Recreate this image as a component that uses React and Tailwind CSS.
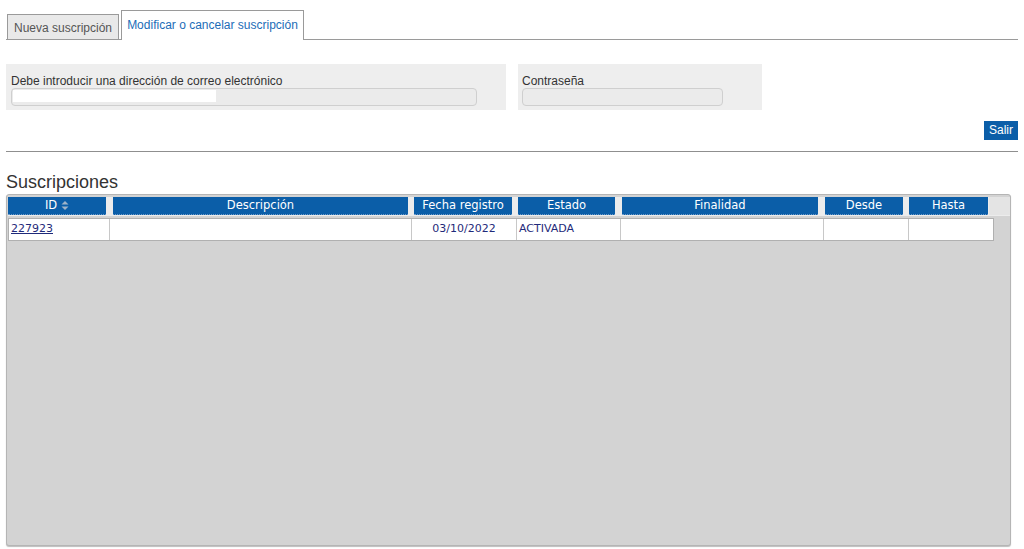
import { useState } from 'react';

// Column layout for the subscriptions grid
const headers = [
  { label: 'ID', cls: 'w-[98px]', sort: true },
  { label: 'Descripción', cls: 'ml-[7px] w-[295px]' },
  { label: 'Fecha registro', cls: 'ml-[6px] w-[98px]' },
  { label: 'Estado', cls: 'ml-[6px] w-[97px]' },
  { label: 'Finalidad', cls: 'ml-[7px] w-[196px]' },
  { label: 'Desde', cls: 'ml-[7px] w-[78px]' },
  { label: 'Hasta', cls: 'ml-[6px] w-[79px]' },
];

const rows = [
  { id: '227923', descripcion: '', fecha: '03/10/2022', estado: 'ACTIVADA', finalidad: '', desde: '', hasta: '' },
];

function SortIcon() {
  return (
    <svg width="8" height="11" viewBox="0 0 8 11" className="ml-[4px] inline-block">
      <path d="M4 1 L7.5 4.5 H0.5 Z" fill="#9fb3c8" />
      <path d="M4 10 L7.5 6.5 H0.5 Z" fill="#9fb3c8" />
    </svg>
  );
}

export default function App() {
  // Selected tab
  const [tab, setTab] = useState('modificar');

  return (
    <div className="min-h-[549px] bg-white px-[6px] font-['Liberation_Sans',Arial,sans-serif] text-[12px] text-[#333]">
      {/* Tabs */}
      <div className="flex items-end h-[40px] border-b border-[#9a9a9a]">
        <button
          onClick={() => setTab('nueva')}
          className="ml-[1px] w-[112px] h-[26px] -mb-[1px] border border-[#9a9a9a] bg-[#e9e9e9] text-[#555] text-[12px] leading-[24px] pt-[1px]"
        >
          Nueva suscripción
        </button>
        <button
          onClick={() => setTab('modificar')}
          className="ml-[2px] w-[183px] h-[30px] -mb-[1px] border border-b-0 border-[#9a9a9a] bg-white text-[#1c6db7] text-[12px] leading-[28px] pb-[1px]"
        >
          Modificar o cancelar suscripción
        </button>
      </div>

      {/* Credentials */}
      <div className="flex mt-[24px]">
        <div className="w-[500px] h-[46px] bg-[#eeeeee] pl-[5px] pt-[10px]">
          <div className="leading-[14px] text-[#333]">Debe introducir una dirección de correo electrónico</div>
          <div className="w-[466px] h-[18px] rounded-[4px] border border-[#cfcfcf] bg-[#ebebeb] relative">
            <div className="absolute left-[1px] top-[1px] w-[203px] h-[12px] bg-white" />
          </div>
        </div>
        <div className="ml-[12px] w-[244px] h-[46px] bg-[#eeeeee] pl-[4px] pt-[10px]">
          <div className="leading-[14px] text-[#333]">Contraseña</div>
          <div className="w-[201px] h-[18px] rounded-[4px] border border-[#cfcfcf] bg-[#ebebeb]" />
        </div>
      </div>

      {/* Logout */}
      <div className="flex justify-end mt-[11px]">
        <button className="h-[19px] w-[34px] bg-[#0b5ea8] text-white text-[12px] leading-[19px]">Salir</button>
      </div>

      <div className="mt-[11px] border-t border-[#8f8f8f]" />

      <h2 className="mt-[19px] text-[18px] leading-[22px] text-[#333]">Suscripciones</h2>

      {/* Subscriptions grid */}
      <div className="mt-[1px] mr-[7px] h-[352px] rounded-[3px] border border-[#b5b5b5] bg-[#d3d3d3] pl-[1px] pt-[2px] shadow-[0_1px_1px_#bdbdbd] font-['DejaVu_Sans',Verdana,sans-serif] text-[11px] overflow-hidden">
        <div className="flex h-[19px] bg-[#ececec]">
          {headers.map((h) => (
            <div
              key={h.label}
              className={`${h.cls} shrink-0 h-[18px] flex items-center justify-center bg-[#0b5ea8] text-white text-[11.5px] border-b border-dotted border-[#6d9ccb]`}
            >
              {h.label}
              {h.sort && <SortIcon />}
            </div>
          ))}
          <div className="ml-[1px] flex-1 h-[18px] bg-[#e4e4e4]" />
        </div>

        {rows.map((r) => (
          <div key={r.id} className="mt-[2px] flex h-[23px] w-[986px] bg-white border border-[#b0b0b0] text-[#1f2a7a]">
            <div className="w-[101px] shrink-0 pl-[2px] flex items-center border-r border-[#c8c8c8]">
              <a href="#" className="underline text-[#1f2a7a]">{r.id}</a>
            </div>
            <div className="w-[302px] shrink-0 border-r border-[#c8c8c8]">{r.descripcion}</div>
            <div className="w-[105px] shrink-0 flex items-center justify-center border-r border-[#c8c8c8]">{r.fecha}</div>
            <div className="w-[104px] shrink-0 pl-[2px] flex items-center border-r border-[#c8c8c8]">{r.estado}</div>
            <div className="w-[203px] shrink-0 border-r border-[#c8c8c8]">{r.finalidad}</div>
            <div className="w-[85px] shrink-0 border-r border-[#c8c8c8]">{r.desde}</div>
            <div className="flex-1">{r.hasta}</div>
          </div>
        ))}
      </div>
    </div>
  );
}
